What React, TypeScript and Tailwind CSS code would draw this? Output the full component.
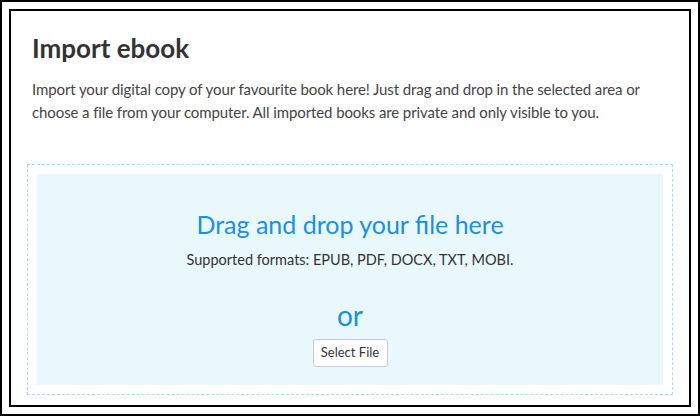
export default function App() {
  return (
    <div className="w-[700px] h-[416px] border-2 border-black bg-white p-[7px]" style={{ fontFamily: "Lato, 'Open Sans', sans-serif" }}>
      <div className="h-full border-2 border-black bg-white px-4 flex flex-col">
        <div className="pl-[5px] pt-[20px]">
          <h1 className="text-[26px] leading-[34px] font-bold text-[#333]">Import ebook</h1>
          <p className="mt-[13px] text-[15px] leading-[23px] text-[#444] tracking-[-0.1px]">
            Import your digital copy of your favourite book here! Just drag and drop in the selected area or choose a file
            from your computer. All imported books are private and only visible to you.
          </p>
        </div>
        <div className="mt-[40px] h-[231px] border border-dashed border-[#a8dcef] p-[9px]">
          <div className="h-full bg-[#e9f8fd] flex flex-col items-center pt-[34px]">
            <div className="text-[25px] leading-[32px] text-[#1d8fe1]">Drag and drop your file here</div>
            <div className="mt-[10px] text-[14.5px] leading-[20px] text-[#333]">Supported formats: EPUB, PDF, DOCX, TXT, MOBI.</div>
            <div className="mt-[29px] text-[28px] leading-[32px] text-[#1d8fe1]">or</div>
            <button className="mt-[8px] h-[28px] w-[75px] bg-white border border-[#ccc] rounded-[3px] text-[13px] text-[#333]">
              Select File
            </button>
          </div>
        </div>
      </div>
    </div>
  );
}
